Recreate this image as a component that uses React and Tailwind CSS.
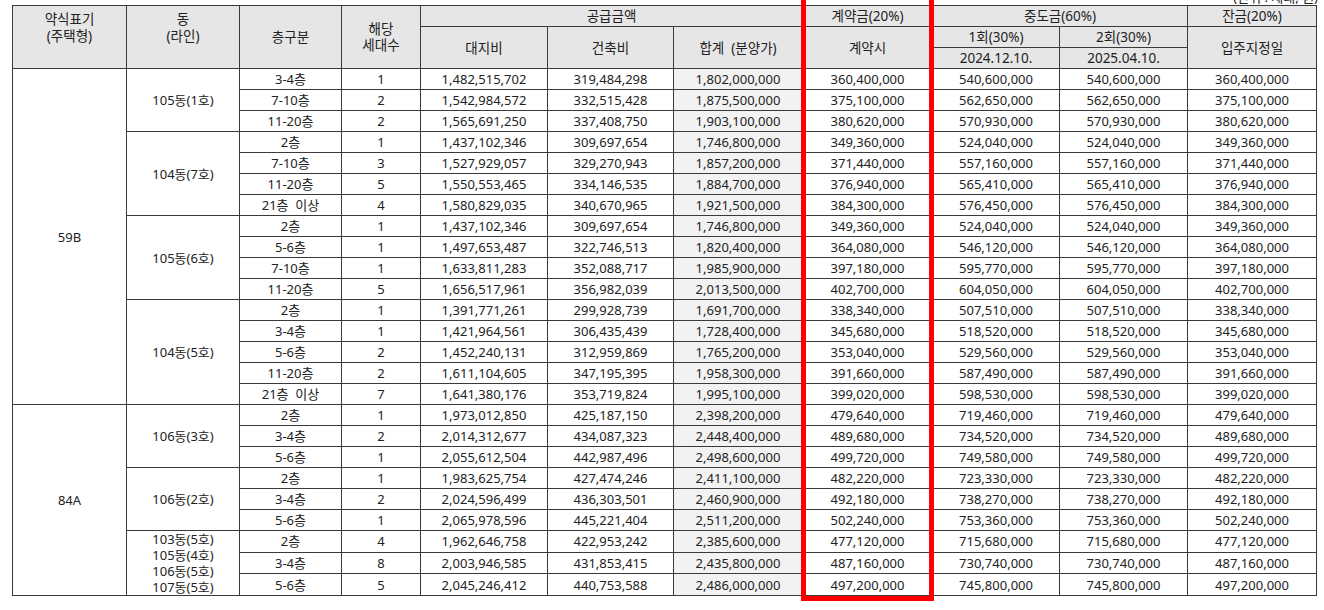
import React from "react";

const groups = [
  {
    type: "59B",
    blocks: [
      {
        dong: ["105동(1호)"],
        rows: [
          ["3-4층", "1", "1,482,515,702", "319,484,298", "1,802,000,000", "360,400,000", "540,600,000", "540,600,000", "360,400,000"],
          ["7-10층", "2", "1,542,984,572", "332,515,428", "1,875,500,000", "375,100,000", "562,650,000", "562,650,000", "375,100,000"],
          ["11-20층", "2", "1,565,691,250", "337,408,750", "1,903,100,000", "380,620,000", "570,930,000", "570,930,000", "380,620,000"],
        ],
      },
      {
        dong: ["104동(7호)"],
        rows: [
          ["2층", "1", "1,437,102,346", "309,697,654", "1,746,800,000", "349,360,000", "524,040,000", "524,040,000", "349,360,000"],
          ["7-10층", "3", "1,527,929,057", "329,270,943", "1,857,200,000", "371,440,000", "557,160,000", "557,160,000", "371,440,000"],
          ["11-20층", "5", "1,550,553,465", "334,146,535", "1,884,700,000", "376,940,000", "565,410,000", "565,410,000", "376,940,000"],
          ["21층  이상", "4", "1,580,829,035", "340,670,965", "1,921,500,000", "384,300,000", "576,450,000", "576,450,000", "384,300,000"],
        ],
      },
      {
        dong: ["105동(6호)"],
        rows: [
          ["2층", "1", "1,437,102,346", "309,697,654", "1,746,800,000", "349,360,000", "524,040,000", "524,040,000", "349,360,000"],
          ["5-6층", "1", "1,497,653,487", "322,746,513", "1,820,400,000", "364,080,000", "546,120,000", "546,120,000", "364,080,000"],
          ["7-10층", "1", "1,633,811,283", "352,088,717", "1,985,900,000", "397,180,000", "595,770,000", "595,770,000", "397,180,000"],
          ["11-20층", "5", "1,656,517,961", "356,982,039", "2,013,500,000", "402,700,000", "604,050,000", "604,050,000", "402,700,000"],
        ],
      },
      {
        dong: ["104동(5호)"],
        rows: [
          ["2층", "1", "1,391,771,261", "299,928,739", "1,691,700,000", "338,340,000", "507,510,000", "507,510,000", "338,340,000"],
          ["3-4층", "1", "1,421,964,561", "306,435,439", "1,728,400,000", "345,680,000", "518,520,000", "518,520,000", "345,680,000"],
          ["5-6층", "2", "1,452,240,131", "312,959,869", "1,765,200,000", "353,040,000", "529,560,000", "529,560,000", "353,040,000"],
          ["11-20층", "2", "1,611,104,605", "347,195,395", "1,958,300,000", "391,660,000", "587,490,000", "587,490,000", "391,660,000"],
          ["21층  이상", "7", "1,641,380,176", "353,719,824", "1,995,100,000", "399,020,000", "598,530,000", "598,530,000", "399,020,000"],
        ],
      },
    ],
  },
  {
    type: "84A",
    blocks: [
      {
        dong: ["106동(3호)"],
        rows: [
          ["2층", "1", "1,973,012,850", "425,187,150", "2,398,200,000", "479,640,000", "719,460,000", "719,460,000", "479,640,000"],
          ["3-4층", "2", "2,014,312,677", "434,087,323", "2,448,400,000", "489,680,000", "734,520,000", "734,520,000", "489,680,000"],
          ["5-6층", "1", "2,055,612,504", "442,987,496", "2,498,600,000", "499,720,000", "749,580,000", "749,580,000", "499,720,000"],
        ],
      },
      {
        dong: ["106동(2호)"],
        rows: [
          ["2층", "1", "1,983,625,754", "427,474,246", "2,411,100,000", "482,220,000", "723,330,000", "723,330,000", "482,220,000"],
          ["3-4층", "2", "2,024,596,499", "436,303,501", "2,460,900,000", "492,180,000", "738,270,000", "738,270,000", "492,180,000"],
          ["5-6층", "1", "2,065,978,596", "445,221,404", "2,511,200,000", "502,240,000", "753,360,000", "753,360,000", "502,240,000"],
        ],
      },
      {
        dong: ["103동(5호)", "105동(4호)", "106동(5호)", "107동(5호)"],
        rows: [
          ["2층", "4", "1,962,646,758", "422,953,242", "2,385,600,000", "477,120,000", "715,680,000", "715,680,000", "477,120,000"],
          ["3-4층", "8", "2,003,946,585", "431,853,415", "2,435,800,000", "487,160,000", "730,740,000", "730,740,000", "487,160,000"],
          ["5-6층", "5", "2,045,246,412", "440,753,588", "2,486,000,000", "497,200,000", "745,800,000", "745,800,000", "497,200,000"],
        ],
      },
    ],
  },
];

const td = "border border-[#3a3a3a] p-0 text-center align-middle h-[21px] leading-[16px] whitespace-pre";
const th = "border border-[#3a3a3a] p-0 text-center align-middle h-[21px] leading-[16px] font-normal text-[13.5px] bg-[#e6e6e6]";

export default function App() {
  return (
    <div
      className="relative w-[1324px] h-[610px] bg-white overflow-hidden text-[13px] text-[#222]"
      style={{ fontFamily: '"Noto Sans", "Noto Sans CJK KR", sans-serif' }}
    >
      <div className="flex justify-end items-end h-[5px] overflow-hidden pr-[6px]">
        <span className="shrink-0 leading-[16px]">(단위 : 세대, 원)</span>
      </div>

      <div className="pl-[12px]">
        <table className="table-fixed border-collapse w-[1304px] border border-[#222]">
          <colgroup>
            <col className="w-[114px]" />
            <col className="w-[113px]" />
            <col className="w-[102px]" />
            <col className="w-[79px]" />
            <col className="w-[127px]" />
            <col className="w-[126px]" />
            <col className="w-[129px]" />
            <col className="w-[130px]" />
            <col className="w-[127px]" />
            <col className="w-[128px]" />
            <col className="w-[129px]" />
          </colgroup>
          <thead>
            <tr>
              <th rowSpan={3} className={th + " !align-top pt-[5px] !leading-[17px]"}>
                약식표기
                <br />
                (주택형)
              </th>
              <th rowSpan={3} className={th + " !align-top pt-[5px] !leading-[17px]"}>
                동
                <br />
                (라인)
              </th>
              <th rowSpan={3} className={th}>층구분</th>
              <th rowSpan={3} className={th}>
                해당
                <br />
                세대수
              </th>
              <th colSpan={3} className={th}>공급금액</th>
              <th className={th}>계약금(20%)</th>
              <th colSpan={2} className={th}>중도금(60%)</th>
              <th className={th}>잔금(20%)</th>
            </tr>
            <tr>
              <th rowSpan={2} className={th}>대지비</th>
              <th rowSpan={2} className={th}>건축비</th>
              <th rowSpan={2} className={th + " whitespace-pre"}>합계  (분양가)</th>
              <th rowSpan={2} className={th}>계약시</th>
              <th className={th}>1회(30%)</th>
              <th className={th}>2회(30%)</th>
              <th rowSpan={2} className={th}>입주지정일</th>
            </tr>
            <tr>
              <th className={th}>2024.12.10.</th>
              <th className={th}>2025.04.10.</th>
            </tr>
          </thead>
          <tbody>
            {groups.map((g) => {
              const total = g.blocks.reduce((n, b) => n + b.rows.length, 0);
              return g.blocks.map((b, bi) =>
                b.rows.map((r, ri) => (
                  <tr key={g.type + bi + ri}>
                    {bi === 0 && ri === 0 && (
                      <td rowSpan={total} className={td}>
                        {g.type}
                      </td>
                    )}
                    {ri === 0 && (
                      <td rowSpan={b.rows.length} className={td}>
                        {b.dong.map((d) => (
                          <div key={d}>{d}</div>
                        ))}
                      </td>
                    )}
                    {r.map((c, ci) => (
                      <td key={ci} className={td + (ci === 4 ? " bg-[#f2f2f2]" : "")}>
                        {c}
                      </td>
                    ))}
                  </tr>
                ))
              );
            })}
          </tbody>
        </table>
      </div>

      <div className="absolute left-[801px] top-[-10px] w-[133px] h-[611px] border-[5px] border-[#ff0000]" />
    </div>
  );
}
